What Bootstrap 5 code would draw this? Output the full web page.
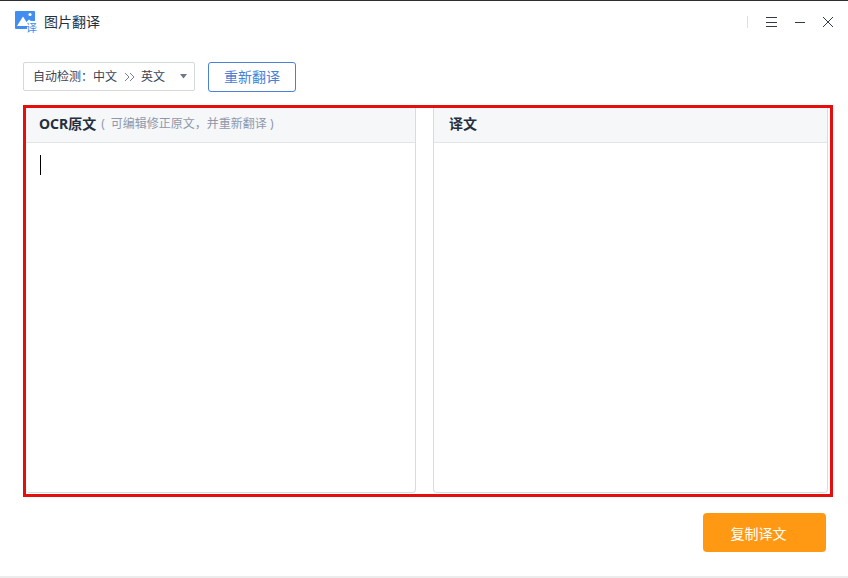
<!DOCTYPE html>
<html lang="zh-CN">
<head>
<meta charset="utf-8">
<meta name="viewport" content="width=device-width, initial-scale=1">
<title>图片翻译</title>
<link href="https://cdn.jsdelivr.net/npm/bootstrap@5.3.0/dist/css/bootstrap.min.css" rel="stylesheet">
<style>
  body { font-family: "Noto Sans", "Noto Sans CJK SC", sans-serif; font-size: 14px; line-height: 20px; color: #262f3e; background: #fff; }
  .app-window { border-top: 1px solid #2e2e30; border-bottom: 2px solid #ececec; }
  .title-bar { height: 42px; padding: 0 13px 0 14px; }
  .app-title { font-size: 14px; line-height: 20px; margin: 0 0 0 6px; }
  .title-divider { width: 1px; height: 12px; background: #dcdfe4; margin-right: 17px; }
  .win-btn { color: #333a48; line-height: 0; }
  .tool-bar { padding: 19px 23px 13px; gap: 13px; }
  .lang-select {
    width: 172px; height: 29px; padding: 0 24px 0 9px; font-size: 12px; line-height: 18px; color: #3a4456;
    border: 1px solid #d5d8de; border-radius: 2px; background-color: #fff; background-repeat: no-repeat;
    background-image:
      url("data:image/svg+xml,%3Csvg xmlns='http://www.w3.org/2000/svg' width='12' height='10' fill='none' stroke='%23788296'%3E%3Cpath d='M1 1l4 4-4 4M6 1l4 4-4 4'/%3E%3C/svg%3E"),
      url("data:image/svg+xml,%3Csvg xmlns='http://www.w3.org/2000/svg' width='8' height='5' fill='%236d7789'%3E%3Cpath d='M0 0h7L3.500 4.500z'/%3E%3C/svg%3E");
    background-position: left 100px center, right 6px center;
    background-size: 12px 10px, 8px 5px;
  }
  .retry-btn { width: 88px; height: 30px; font-size: 14px; line-height: 20px; color: #4a80d6; border: 1px solid #4a80d6; border-radius: 3px; }
  .work-area { margin: 0 15px 0 23px; border: 3px solid #e60d0d; gap: 17px; padding: 0 2px 1px 0; }
  .pane { flex: 1 1 0; border: 1px solid #d8dbe1; border-top: 0; border-radius: 0 0 4px 4px; }
  .pane-source { border-left: 0; }
  .pane-result { flex-grow: 1.01; }
  .pane-head { height: 35px; padding: 0 13px 2px; background: #f5f7f9; border-bottom: 1px solid #e1e4e9; }
  .pane-result .pane-head { padding-left: 15px; }
  .pane-note { font-size: 12px; color: #8f98ab; margin-left: 5px; }
  .pane-text { resize: none; outline: 0; padding: 12px 15px; color: #262f3e; background: transparent; }
  .pane-source .pane-text { background: linear-gradient(#000, #000) 14px 12px / 1px 20px no-repeat; }
  .foot-bar { padding: 16px 22px 24px; }
  .copy-btn, .copy-btn:hover { width: 123px; height: 39px; font-size: 14px; line-height: 20px; color: #fff; background: #ff9913; border-radius: 4px; padding: 2px 12px 0 0; }
</style>
</head>
<body>
<div class="app-window d-flex flex-column min-vh-100">
  <header class="title-bar d-flex align-items-center">
    <svg width="24" height="24" viewBox="0 0 24 24" aria-hidden="true">
      <path fill="#428df0" d="M2 1h18a1 1 0 0 1 1 1v9h-8v8H2a1 1 0 0 1-1-1V2a1 1 0 0 1 1-1z"/>
      <path fill="#fff" d="M3 16L9 6.500 12.500 12 15 9.500 18 12H13v4z"/>
      <circle cx="16" cy="4.500" r="1.600" fill="#fff"/>
      <text x="12" y="21.500" font-size="11" fill="#428df0">译</text>
    </svg>
    <h1 class="app-title fw-normal">图片翻译</h1>
    <div class="d-flex align-items-center ms-auto">
      <span class="title-divider"></span>
      <button type="button" class="win-btn btn p-0 border-0" aria-label="菜单"><svg width="14" height="14" fill="none" stroke="currentColor"><path d="M1 2.500h11M1 7.500h11M1 11.500h11"/></svg></button>
      <button type="button" class="win-btn btn p-0 border-0 ms-3" aria-label="最小化"><svg width="12" height="14" fill="none" stroke="currentColor"><path d="M0 7.500h10"/></svg></button>
      <button type="button" class="win-btn btn p-0 border-0 ms-3" aria-label="关闭"><svg width="12" height="14" fill="none" stroke="currentColor"><path d="M0 2l10 10M10 2L0 12"/></svg></button>
    </div>
  </header>
  <div class="tool-bar d-flex align-items-start">
    <select class="lang-select form-select" aria-label="翻译语言">
      <option>自动检测：中文&emsp;&emsp;英文</option>
      <option>自动检测：英文&emsp;&emsp;中文</option>
    </select>
    <button type="button" class="retry-btn btn p-0">重新翻译</button>
  </div>
  <main class="work-area d-flex flex-grow-1">
    <section class="pane pane-source d-flex flex-column">
      <div class="pane-head d-flex align-items-center">
        <label for="source" class="fw-bold">OCR原文</label>
        <span class="pane-note">(&ensp;可编辑修正原文，并重新翻译&nbsp;)</span>
      </div>
      <textarea id="source" class="pane-text flex-grow-1 w-100 border-0"></textarea>
    </section>
    <section class="pane pane-result d-flex flex-column">
      <div class="pane-head d-flex align-items-center">
        <label for="result" class="fw-bold">译文</label>
      </div>
      <textarea id="result" class="pane-text flex-grow-1 w-100 border-0" readonly></textarea>
    </section>
  </main>
  <footer class="foot-bar d-flex justify-content-end">
    <button type="button" class="copy-btn btn border-0">复制译文</button>
  </footer>
</div>
<script src="https://cdn.jsdelivr.net/npm/bootstrap@5.3.0/dist/js/bootstrap.bundle.min.js"></script>
</body>
</html>
